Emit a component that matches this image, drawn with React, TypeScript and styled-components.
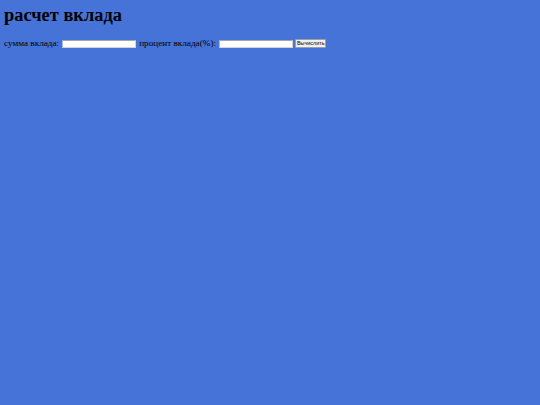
import * as React from "react";
import styled, { createGlobalStyle } from "styled-components";

const GlobalStyle = createGlobalStyle`
  html, body {
    margin: 0;
    background-color: #4673d8;
  }
  body {
    padding: 4px;
    font-family: "Liberation Serif", "Times New Roman", serif;
    color: #000;
  }
`;

const Title = styled.h1`
  margin: 1px 0 13px;
  font-size: 18.4px;
  line-height: 20px;
  font-weight: bold;
`;

const Form = styled.form`
  display: flex;
  align-items: center;
  gap: 3px;
  font-size: 9.2px;
  line-height: 11px;
`;

const Label = styled.label`
  white-space: nowrap;
`;

const Field = styled.input`
  box-sizing: border-box;
  width: 74px;
  height: 8px;
  padding: 0;
  margin: 0;
  border: 1px solid #d4d4d4;
  border-top-color: #a8a8a8;
  border-left-color: #b8b8b8;
  background: #fff;
`;

const Button = styled.button`
  box-sizing: border-box;
  height: 9px;
  padding: 0 1px;
  margin: 0 0 0 -1px;
  font-family: "Liberation Sans", Arial, sans-serif;
  font-size: 5.4px;
  line-height: 7px;
  color: #000;
  background: #f0f0f0;
  border: 1px solid #a0a0a0;
  border-radius: 1px;
`;

const App: React.FC = () => {
  return (
    <>
      <GlobalStyle />
      <Title>расчет вклада</Title>
      <Form onSubmit={(e) => e.preventDefault()}>
        <Label>сумма вклада:</Label>
        <Field type="text" />
        <Label>процент вклада(%):</Label>
        <Field type="text" />
        <Button type="submit">Вычислить</Button>
      </Form>
    </>
  );
};

export default App;
